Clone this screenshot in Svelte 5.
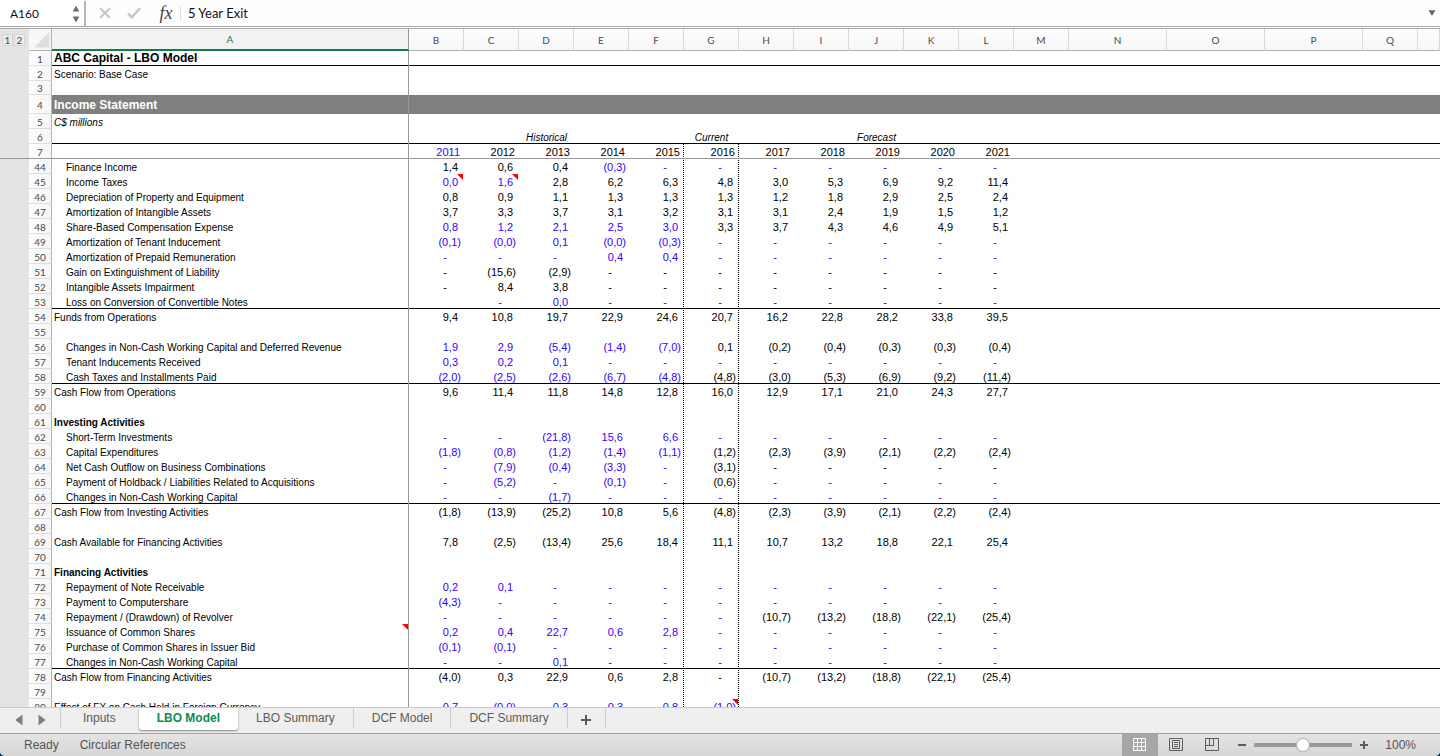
<script>
  const columns = ['B', 'C', 'D', 'E', 'F', 'G', 'H', 'I', 'J', 'K', 'L', 'M', 'N', 'O', 'P', 'Q', ''];

  const years = ['2011', '2012', '2013', '2014', '2015', '2016', '2017', '2018', '2019', '2020', '2021'];

  // n: row number, t: label, k: label style, v: values for B to L.
  // A leading "b" marks a hard-coded (blue) value, "_" an empty cell.
  const source = [
    { n: 44, t: 'Finance Income', k: 'indent', v: '1,4 0,6 0,4 b(0,3) b- b- b- b- b- b- b-' },
    { n: 45, t: 'Income Taxes', k: 'indent', v: 'b0,0 b1,6 2,8 6,2 6,3 4,8 3,0 5,3 6,9 9,2 11,4', notes: [0, 1] },
    { n: 46, t: 'Depreciation of Property and Equipment', k: 'indent', v: '0,8 0,9 1,1 1,3 1,3 1,3 1,2 1,8 2,9 2,5 2,4' },
    { n: 47, t: 'Amortization of Intangible Assets', k: 'indent', v: '3,7 3,3 3,7 3,1 3,2 3,1 3,1 2,4 1,9 1,5 1,2' },
    { n: 48, t: 'Share-Based Compensation Expense', k: 'indent', v: 'b0,8 b1,2 b2,1 b2,5 b3,0 3,3 3,7 4,3 4,6 4,9 5,1' },
    { n: 49, t: 'Amortization of Tenant Inducement', k: 'indent', v: 'b(0,1) b(0,0) b0,1 b(0,0) b(0,3) b- b- b- b- b- b-' },
    { n: 50, t: 'Amortization of Prepaid Remuneration', k: 'indent', v: 'b- b- b- b0,4 b0,4 b- b- b- b- b- b-' },
    { n: 51, t: 'Gain on Extinguishment of Liability', k: 'indent', v: '- (15,6) (2,9) - - - - - - - -' },
    { n: 52, t: 'Intangible Assets Impairment', k: 'indent', v: '- 8,4 3,8 - - - - - - - -' },
    { n: 53, t: 'Loss on Conversion of Convertible Notes', k: 'indent', v: '_ b- b0,0 b- b- b- b- b- b- b- b-', line: true },
    { n: 54, t: 'Funds from Operations', v: '9,4 10,8 19,7 22,9 24,6 20,7 16,2 22,8 28,2 33,8 39,5' },
    { n: 55 },
    { n: 56, t: 'Changes in Non-Cash Working Capital and Deferred Revenue', k: 'indent', v: 'b1,9 b2,9 b(5,4) b(1,4) b(7,0) 0,1 (0,2) (0,4) (0,3) (0,3) (0,4)' },
    { n: 57, t: 'Tenant Inducements Received', k: 'indent', v: 'b0,3 b0,2 b0,1 b- b- b- b- b- b- b- b-' },
    { n: 58, t: 'Cash Taxes and Installments Paid', k: 'indent', v: 'b(2,0) b(2,5) b(2,6) b(6,7) b(4,8) (4,8) (3,0) (5,3) (6,9) (9,2) (11,4)', line: true },
    { n: 59, t: 'Cash Flow from Operations', v: '9,6 11,4 11,8 14,8 12,8 16,0 12,9 17,1 21,0 24,3 27,7' },
    { n: 60 },
    { n: 61, t: 'Investing Activities', k: 'strong' },
    { n: 62, t: 'Short-Term Investments', k: 'indent', v: 'b- b- b(21,8) b15,6 b6,6 b- b- b- b- b- b-' },
    { n: 63, t: 'Capital Expenditures', k: 'indent', v: 'b(1,8) b(0,8) b(1,2) b(1,4) b(1,1) (1,2) (2,3) (3,9) (2,1) (2,2) (2,4)' },
    { n: 64, t: 'Net Cash Outflow on Business Combinations', k: 'indent', v: 'b- b(7,9) b(0,4) b(3,3) b- (3,1) - - - - -' },
    { n: 65, t: 'Payment of Holdback / Liabilities Related to Acquisitions', k: 'indent', v: 'b- b(5,2) b- b(0,1) b- (0,6) b- b- b- b- b-' },
    { n: 66, t: 'Changes in Non-Cash Working Capital', k: 'indent', v: 'b- b- b(1,7) b- b- b- b- b- b- b- b-', line: true },
    { n: 67, t: 'Cash Flow from Investing Activities', v: '(1,8) (13,9) (25,2) 10,8 5,6 (4,8) (2,3) (3,9) (2,1) (2,2) (2,4)' },
    { n: 68 },
    { n: 69, t: 'Cash Available for Financing Activities', v: '7,8 (2,5) (13,4) 25,6 18,4 11,1 10,7 13,2 18,8 22,1 25,4' },
    { n: 70 },
    { n: 71, t: 'Financing Activities', k: 'strong' },
    { n: 72, t: 'Repayment of Note Receivable', k: 'indent', v: 'b0,2 b0,1 b- b- b- b- b- b- b- b- b-' },
    { n: 73, t: 'Payment to Computershare', k: 'indent', v: 'b(4,3) b- b- b- b- b- b- b- b- b- b-' },
    { n: 74, t: 'Repayment / (Drawdown) of Revolver', k: 'indent', v: 'b- b- b- b- b- b- (10,7) (13,2) (18,8) (22,1) (25,4)' },
    { n: 75, t: 'Issuance of Common Shares', k: 'indent', v: 'b0,2 b0,4 b22,7 b0,6 b2,8 b- b- b- b- b- b-', labelNote: true },
    { n: 76, t: 'Purchase of Common Shares in Issuer Bid', k: 'indent', v: 'b(0,1) b(0,1) b- b- b- b- b- b- b- b- b-' },
    { n: 77, t: 'Changes in Non-Cash Working Capital', k: 'indent', v: 'b- b- b0,1 b- b- b- b- b- b- b- b-', line: true },
    { n: 78, t: 'Cash Flow from Financing Activities', v: '(4,0) 0,3 22,9 0,6 2,8 - (10,7) (13,2) (18,8) (22,1) (25,4)' },
    { n: 79 },
    { n: 80, t: 'Effect of FX on Cash Held in Foreign Currency', v: 'b0,7 b(0,0) b0,3 b0,3 b0,8 b(1,0) _ _ _ _ _', notes: [5] }
  ];

  const blank = '_ _ _ _ _ _ _ _ _ _ _';
  const rows = source.map((r) => ({
    ...r,
    cells: (r.v ?? blank).split(' ').map((raw, i) => {
      const blue = raw.startsWith('b');
      const text = raw.replace('b', '').replace('_', '');
      return { text, blue, dash: text === '-', neg: text.startsWith('('), note: r.notes?.includes(i) ?? false };
    })
  }));

  const tabs = ['Inputs', 'LBO Model', 'LBO Summary', 'DCF Model', 'DCF Summary'];
  let active = $state('LBO Model');
  let zoom = $state(100);
  let address = $state('A160');
  let formula = $state('5 Year Exit');
</script>

<div class="window">
  <header class="formula-bar">
    <div class="name-box">
      <input aria-label="Name box" bind:value={address} />
      <svg width="8" height="18" viewBox="0 0 8 18" aria-hidden="true">
        <path d="M4 0.5 7.3 6.5H0.7zM4 17.500 0.7 11.500H7.3z" fill="#6e6e6e" />
      </svg>
    </div>
    <button class="cancel" aria-label="Cancel">
      <svg width="12" height="12" viewBox="0 0 12 12"><path d="M1.200 1.200 10.800 10.800M10.800 1.200 1.200 10.800" stroke="#c6c6c6" stroke-width="2.100" /></svg>
    </button>
    <button class="enter" aria-label="Enter">
      <svg width="14" height="12" viewBox="0 0 14 12"><path d="M1 6.300 4.800 10.200 13 1.300" fill="none" stroke="#c6c6c6" stroke-width="2.400" /></svg>
    </button>
    <button class="fx" aria-label="Insert function">fx</button>
    <input class="formula" aria-label="Formula" bind:value={formula} />
    <button class="expand" aria-label="Expand formula bar">
      <svg width="8" height="6" viewBox="0 0 8 6"><path d="M0.500 0.300H7.500L4 5.700z" fill="#636363" /></svg>
    </button>
  </header>

  <main class="sheet">
    <table>
      <colgroup>
        <col class="w-gutter" /><col class="w-rownum" /><col class="w-a" />
        {#each columns as c}
          <col class={c === '' ? 'w-rest' : 'NOP'.includes(c) ? 'w-wide' : 'w-std'} />
        {/each}
      </colgroup>
      <thead>
        <tr class="letters">
          <td class="gutter">
            <div class="levels"><button>1</button><button>2</button></div>
          </td>
          <td class="corner">
            <svg width="16" height="16" viewBox="0 0 16 16" aria-hidden="true"><path d="M15.500 0V15.500H0z" fill="#dedede" /></svg>
          </td>
          <th class="selected" scope="col">A</th>
          {#each columns as c}<th scope="col">{c}</th>{/each}
        </tr>
      </thead>
      <tbody class="frozen">
        <tr class="line">
          <td class="gutter"></td><th class="num" scope="row">1</th>
          <td class="label title">ABC Capital - LBO Model</td><td colspan="17"></td>
        </tr>
        <tr>
          <td class="gutter"></td><th class="num" scope="row">2</th>
          <td class="label">Scenario: Base Case</td><td colspan="17"></td>
        </tr>
        <tr class="short">
          <td class="gutter"></td><th class="num" scope="row">3</th>
          <td class="label"></td><td colspan="17"></td>
        </tr>
        <tr class="band">
          <td class="gutter"></td><th class="num" scope="row">4</th>
          <td class="label title">Income Statement</td><td colspan="17"></td>
        </tr>
        <tr>
          <td class="gutter"></td><th class="num" scope="row">5</th>
          <td class="label period">C$ millions</td><td colspan="17"></td>
        </tr>
        <tr class="line">
          <td class="gutter"></td><th class="num" scope="row">6</th>
          <td class="label"></td>
          <td class="period center" colspan="5">Historical</td>
          <td class="period center">Current</td>
          <td class="period center" colspan="5">Forecast</td>
          <td colspan="6"></td>
        </tr>
        <tr class="freeze">
          <td class="gutter"></td><th class="num" scope="row">7</th>
          <td class="label"></td>
          {#each years as y, i}
            <td class="year" class:blue={i === 0} class:dotted={i === 4 || i === 5}>{y}</td>
          {/each}
          <td colspan="6"></td>
        </tr>
      </tbody>
      <tbody class="scrolled">
        {#each rows as r}
          <tr class:line={r.line}>
            <td class="gutter"></td><th class="num" scope="row">{r.n}</th>
            <td class="label {r.k ?? ''}" class:note={r.labelNote}>{r.t ?? ''}</td>
            {#each r.cells as c, i}
              <td
                class="value"
                class:blue={c.blue}
                class:dash={c.dash}
                class:neg={c.neg}
                class:note={c.note}
                class:dotted={i === 4 || i === 5}>{c.text}</td>
            {/each}
            <td colspan="6"></td>
          </tr>
        {/each}
      </tbody>
    </table>
  </main>

  <nav class="tabs" aria-label="Sheets">
    <div class="arrows">
      <button aria-label="Previous sheet"><svg width="8" height="12" viewBox="0 0 8 12"><path d="M7.500 0.500V11.500L0.300 6z" fill="#7f7f7f" /></svg></button>
      <button aria-label="Next sheet"><svg width="8" height="12" viewBox="0 0 8 12"><path d="M0.500 0.500V11.500L7.700 6z" fill="#7f7f7f" /></svg></button>
    </div>
    {#each tabs as t}
      <button class="tab" class:active={t === active} onclick={() => (active = t)}>{t}</button>
    {/each}
    <button class="add" aria-label="Add sheet">
      <svg width="10" height="10" viewBox="0 0 10 10"><path d="M5 0V10M0 5H10" stroke="#5c5c5c" stroke-width="2" /></svg>
    </button>
  </nav>

  <footer class="status">
    <span>Ready</span>
    <span>Circular References</span>
    <div class="views">
      <button class="on" aria-label="Normal view">
        <svg width="14" height="14" viewBox="0 0 14 14" fill="none" stroke="#fff">
          <path d="M0.500 0.500H12.500V12.500H0.500zM4.500 0V13M8.500 0V13M0 4.500H13M0 8.500H13" />
        </svg>
      </button>
      <button aria-label="Page layout view">
        <svg width="14" height="14" viewBox="0 0 14 14" fill="none" stroke="#5f5f5f">
          <path d="M0.500 0.500H13.500V12.500H0.500zM3.500 2.500H10.500V10.500H3.500zM5 4.500H9M5 6.500H9M5 8.500H9" />
        </svg>
      </button>
      <button aria-label="Page break view">
        <svg width="14" height="14" viewBox="0 0 14 14" fill="none" stroke="#5f5f5f">
          <path d="M0.500 0.500H13.500V12.500H0.500zM4.500 0.500V7.500M8.500 0.500V7.500M0.500 7.500H9" />
        </svg>
      </button>
    </div>
    <div class="zoom">
      <button aria-label="Zoom out"><svg width="8" height="8" viewBox="0 0 8 8"><path d="M0 4H8" stroke="#5c5c5c" stroke-width="2" /></svg></button>
      <input type="range" min="0" max="200" aria-label="Zoom" bind:value={zoom} />
      <button aria-label="Zoom in"><svg width="8" height="8" viewBox="0 0 8 8"><path d="M4 0V8M0 4H8" stroke="#5c5c5c" stroke-width="2" /></svg></button>
      <output>{zoom}%</output>
    </div>
  </footer>
</div>

<style>
  :global(body) {
    margin: 0;
    background: #0c2c4c;
  }
  .window {
    display: flex;
    flex-direction: column;
    height: 100vh;
    overflow: hidden;
    background: #fff;
    border-radius: 0 0 5px 5px;
    font-family: 'Liberation Sans', Arial, sans-serif;
    color: #000;
  }
  button {
    display: flex;
    align-items: center;
    justify-content: center;
    padding: 0;
    border: 0;
    background: none;
    font: inherit;
    color: inherit;
  }
  svg {
    display: block;
  }

  .formula-bar {
    display: flex;
    align-items: center;
    flex: none;
    height: 26px;
    border-bottom: 1px solid #a8a8a8;
    background: #fdfdfd;
    font-family: Lato, Carlito, sans-serif;
    font-size: 12px;
  }
  .formula-bar input {
    border: 0;
    padding: 0;
    outline: 0;
    background: transparent;
    font: inherit;
    color: #111;
    min-width: 0;
  }
  .name-box {
    display: flex;
    align-items: center;
    justify-content: space-between;
    box-sizing: border-box;
    width: 86px;
    height: 25px;
    padding: 1px 4px 0 10px;
    border-right: 2px solid #b4b4b4;
    background: #fff;
  }
  .name-box input {
    width: 56px;
  }
  .cancel {
    width: 12px;
    margin-left: 13px;
  }
  .enter {
    width: 14px;
    margin-left: 16px;
  }
  .fx {
    width: 18px;
    height: 16px;
    margin: 0 5px 0 16px;
    font: italic 18px/16px 'Liberation Serif', serif;
    color: #444;
  }
  .formula-bar .formula {
    flex: 1;
    height: 15px;
    padding-left: 7px;
    border-left: 1px solid #ddd;
    font-size: 13px;
  }
  .expand {
    width: 16px;
  }

  .sheet {
    flex: 1;
    min-height: 0;
    overflow: hidden;
    margin-top: 1px;
    border-top: 1px solid #a8a8a8;
  }
  table {
    width: 100%;
    table-layout: fixed;
    border-collapse: separate;
    border-spacing: 0;
    font-size: 11px;
    line-height: 13px;
  }
  .w-gutter { width: 29px; }
  .w-rownum { width: 23px; }
  .w-a { width: 357px; }
  .w-std { width: 55px; }
  .w-wide { width: 98px; }
  td,
  th {
    box-sizing: border-box;
    height: 15px;
    padding: 0;
    font-weight: normal;
    white-space: nowrap;
    vertical-align: bottom;
  }
  .letters td,
  .letters th {
    height: 22px;
    vertical-align: middle;
    border-bottom: 1px solid #b2b2b2;
  }
  .letters th {
    border-right: 1px solid #dadada;
    background: linear-gradient(#fefefe, #f6f6f6);
    font: 10px/12px Lato, Carlito, sans-serif;
    color: #4a4a4a;
  }
  .letters .selected {
    border-right-color: #999;
    border-bottom: 2px solid #107c48;
    background: #f2f2f2;
    color: #107c48;
  }
  .letters .corner {
    padding-left: 5px;
    border-right: 1px solid #b2b2b2;
    background: #f7f7f7;
  }
  .gutter {
    background: #e4e4e4;
  }
  .letters .gutter {
    border-bottom-color: #e4e4e4;
  }
  .levels {
    display: flex;
    gap: 1px;
    padding-left: 2px;
  }
  .levels button {
    box-sizing: border-box;
    width: 11px;
    height: 12px;
    border: 1px solid #d4d4d4;
    background: #ececec;
    font: 10px/10px Lato, Carlito, sans-serif;
    color: #4a4a4a;
  }
  .num {
    border-right: 1px solid #b2b2b2;
    border-bottom: 1px solid #dedede;
    background: linear-gradient(90deg, #fdfdfd, #f6f6f6);
    font: 10px/12px Lato, Carlito, sans-serif;
    text-align: center;
    color: #4a4a4a;
  }
  .label {
    padding-left: 2px;
    border-right: 1px solid #999;
    font-size: 10px;
  }
  .indent {
    padding-left: 14px;
  }
  .strong {
    font-weight: bold;
  }
  .title {
    font-size: 12px;
    font-weight: bold;
  }
  .line .title {
    padding-bottom: 1px;
  }
  .short td,
  .short th {
    height: 14px;
  }
  .band td,
  .band th {
    height: 19px;
    padding-top: 2px;
    vertical-align: middle;
  }
  .band td:not(.gutter) {
    background: #808080;
    color: #fff;
  }
  .line td:not(.gutter) {
    box-shadow: inset 0 -1px #000;
  }
  .freeze td {
    box-shadow: inset 0 -1px #999;
  }
  .freeze th {
    border-bottom-color: #999;
  }
  .period {
    font-size: 10px;
    font-style: italic;
  }
  .center {
    text-align: center;
  }
  .year,
  .value {
    text-align: right;
  }
  .year { padding-right: 4px; }
  .value { padding-right: 6px; }
  .neg { padding-right: 3px; }
  .dash { padding-right: 17px; }
  /* Rows are 15px high, so the dots start one pixel later in every other row. */
  .dotted {
    background: repeating-linear-gradient(#000 0 1px, transparent 1px 2px) right top / 1px 100% no-repeat;
  }
  .scrolled tr:nth-child(odd) .dotted {
    background-image: repeating-linear-gradient(transparent 0 1px, #000 1px 2px);
  }
  .blue {
    color: #3300ff;
  }
  .note {
    position: relative;
  }
  .note::after {
    content: '';
    position: absolute;
    top: 0;
    right: 0;
    width: 6px;
    height: 6px;
    background: #f00;
    clip-path: polygon(0 0, 100% 0, 100% 100%);
  }
  .value.note::after {
    right: 1px;
  }

  .tabs {
    display: flex;
    flex: none;
    height: 25px;
    border-top: 1px solid #cbcbcb;
    border-bottom: 1px solid #a0a0a0;
    background: #efefef;
    font-size: 12px;
    color: #5c5c5c;
  }
  .arrows {
    display: flex;
    box-sizing: border-box;
    width: 61px;
    height: 20px;
    padding: 4px 0 0 15px;
    gap: 15px;
    border-right: 1px solid #cbcbcb;
  }
  .tab,
  .add {
    box-sizing: border-box;
    height: 20px;
    border-right: 1px solid #cbcbcb;
  }
  .tab {
    padding: 0 18px;
  }
  .tab:nth-of-type(1) {
    padding: 0 23px 0 22px;
    border-right: 0;
  }
  .tab.active {
    height: 22px;
    padding: 0 18px 2px;
    border-right: 0;
    border-radius: 0 0 3px 3px;
    background: #fff;
    box-shadow: 0 1px 2px #888;
    font-weight: bold;
    color: #0f8a52;
  }
  .add {
    width: 38px;
    padding-top: 3px;
  }

  .status {
    display: flex;
    align-items: center;
    flex: none;
    height: 22px;
    padding: 0 24px;
    gap: 21px;
    background: linear-gradient(#e4e4e4, #d6d6d6);
    font-size: 12px;
    color: #555;
  }
  .views {
    display: flex;
    align-self: stretch;
    margin-left: auto;
  }
  .views button {
    width: 36px;
  }
  .views .on {
    background: #a6a6a6;
  }
  .zoom {
    display: flex;
    align-items: center;
    gap: 8px;
    margin-left: -13px;
  }
  .zoom input {
    appearance: none;
    width: 98px;
    height: 12px;
    margin: 0;
    background: linear-gradient(#999, #999) center / 100% 4px no-repeat;
  }
  .zoom input::-webkit-slider-thumb {
    appearance: none;
    width: 12px;
    height: 12px;
    border-radius: 50%;
    background: #fff;
    box-shadow: 0 0 1px 1px #b0b0b0;
  }
  .zoom output {
    margin-left: 9px;
  }
</style>
